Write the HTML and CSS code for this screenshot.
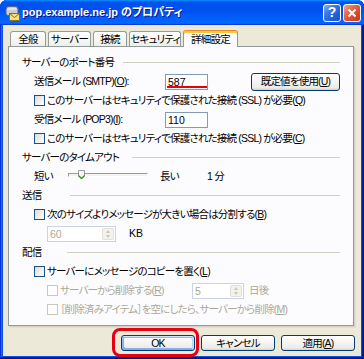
FILE: index.html
```html
<!DOCTYPE html>
<html lang="ja">
<head>
  <meta charset="UTF-8" />
  <title>pop.example.ne.jp のプロパティ</title>
  <link rel="stylesheet" href="styles.css">
</head>
<body>

<div class="window">
  <div class="titlebar">
    <svg class="app-icon" width="16" height="16" viewBox="0 0 16 16">
      <path d="M2 4.5 Q2 1.5 5 1.5 L11 1.5 Q14 1.5 14 4.5 L14 8.5 Q14 10.5 12 10.5 L4 10.5 Q2 10.5 2 8.5 Z" fill="#c9ccd3" stroke="#5d6677"/>
      <path d="M3.5 4 L12.5 4" stroke="#ffffff" stroke-width="1"/>
      <rect x="5.5" y="8.5" width="10" height="7" fill="#f5e27a" stroke="#8c6d12"/>
      <path d="M5.5 8.5 L10.5 12.5 L15.5 8.5" fill="none" stroke="#8c6d12"/>
    </svg>
    <span class="title">pop.example.ne.jp のプロパティ</span>
    <div class="title-buttons">
      <span class="tb-btn tb-help">?</span>
      <span class="tb-btn tb-close">
        <svg width="10" height="10" viewBox="0 0 10 10"><path d="M1.5 1.5 L8.5 8.5 M8.5 1.5 L1.5 8.5" stroke="#fff" stroke-width="2"/></svg>
      </span>
    </div>
  </div>

  <div class="client">
    <ul class="tabs">
      <li class="tab tab-general">全般</li>
      <li class="tab tab-server">サーバー</li>
      <li class="tab tab-conn">接続</li>
      <li class="tab tab-security">セキュリティ</li>
      <li class="tab tab-advanced active">詳細設定</li>
    </ul>

    <div class="panel">
      <div class="sec-head">
        <span class="sec-title w-port">サーバーのポート番号</span>
        <i class="rule"></i>
      </div>
      <div class="row indent">
        <span class="port-label">送信メール (SMTP)(<u>O</u>):</span>
        <span class="field marked">587</span>
        <button class="btn btn-reset">既定値を使用(<u>U</u>)</button>
      </div>
      <div class="row indent">
        <span class="cb"></span>このサーバーはセキュリティで保護された接続 (SSL) が必要(<u>Q</u>)
      </div>
      <div class="row indent">
        <span class="port-label">受信メール (POP3)(<u>I</u>):</span>
        <span class="field">110</span>
      </div>
      <div class="row indent">
        <span class="cb"></span>このサーバーはセキュリティで保護された接続 (SSL) が必要(<u>C</u>)
      </div>

      <div class="sec-head">
        <span class="sec-title w-timeout">サーバーのタイムアウト</span>
        <i class="rule"></i>
      </div>
      <div class="row indent timeout-row">
        <span>短い</span>
        <span class="trackbar">
          <span class="channel"></span>
          <svg class="thumb" width="7" height="10" viewBox="0 0 7 10">
            <path d="M0.5 0.5 L6.5 0.5 L6.5 6 L3.5 9 L0.5 6 Z" fill="#f7f7f4" stroke="#9a9a94"/>
            <path d="M0.5 5.5 L3.5 8.5 L6.5 5.5" fill="none" stroke="#21a121" stroke-width="1.2"/>
          </svg>
        </span>
        <span class="long-label">長い</span>
        <span>1 分</span>
      </div>

      <div class="sec-head">
        <span class="sec-title w-send">送信</span>
        <i class="rule"></i>
      </div>
      <div class="row indent">
        <span class="cb"></span>次のサイズよりメッセージが大きい場合は分割する(<u>B</u>)
      </div>
      <div class="row indent2">
        <span class="spin spin-size">
          <span class="spin-value">60</span>
          <span class="spin-btns"><span class="up"></span><span class="down"></span></span>
        </span>
        <span class="unit-kb">KB</span>
      </div>

      <div class="sec-head">
        <span class="sec-title w-deliver">配信</span>
        <i class="rule"></i>
      </div>
      <div class="row indent">
        <span class="cb"></span>サーバーにメッセージのコピーを置く(<u>L</u>)
      </div>
      <div class="row indent2 disabled">
        <span class="delete-label"><span class="cb cb-off"></span>サーバーから削除する(<u>R</u>)</span>
        <span class="spin spin-days">
          <span class="spin-value">5</span>
          <span class="spin-btns"><span class="up"></span><span class="down"></span></span>
        </span>
        <span class="unit-days">日後</span>
      </div>
      <div class="row indent2 disabled">
        <span class="cb cb-off"></span>［削除済みアイテム］を空にしたら、サーバーから削除(<u>M</u>)
      </div>
    </div>

    <div class="actions">
      <span class="ok-wrap"><button class="btn btn-action btn-default">OK</button></span>
      <button class="btn btn-action">キャンセル</button>
      <button class="btn btn-action">適用(<u>A</u>)</button>
    </div>
  </div>
</div>

</body>
</html>
```

FILE: styles.css
```css
* {
  box-sizing: border-box;
}

body {
  margin: 0;
  background: #ffffff;
  font-family: "Liberation Sans", "Noto Sans CJK JP", sans-serif;
  font-size: 11px;
  line-height: 13px;
  color: #000;
  font-feature-settings: "palt";
}

u {
  text-decoration: underline;
  text-underline-offset: 1px;
}

/* window frame */
.window {
  width: 364px;
  height: 359px;
  display: flex;
  flex-direction: column;
  background: #0a52e0;
  border-radius: 7px 7px 0 0;
  box-shadow: inset -1px -1px #00138c, inset 1px 1px #0831d9, inset -2px -2px #001ea0, inset 2px 2px #166aee;
}

.titlebar {
  height: 25px;
  display: flex;
  align-items: center;
  padding: 0 3px 0 4px;
  border-radius: 7px 7px 0 0;
  background: linear-gradient(180deg, #0997ff, #0053ee 8%, #0050ee 40%, #0066ff 88%, #0066ff 93%, #005bff 95%, #003dd7 96%, #003dd7);
}

.app-icon {
  flex: none;
  margin-top: 1px;
}

.title {
  margin-left: 2px;
  color: #fff;
  font-weight: bold;
  font-size: 11px;
  text-shadow: 1px 1px #0f1089;
  white-space: nowrap;
}

.title-buttons {
  margin-left: auto;
  display: flex;
  gap: 2px;
}

.tb-btn {
  width: 18px;
  height: 18px;
  border: 1px solid #fff;
  border-radius: 3px;
  display: flex;
  align-items: center;
  justify-content: center;
  color: #fff;
  font-weight: bold;
  font-size: 14px;
}

.tb-help {
  background: linear-gradient(135deg, #8fb0f2 0%, #3c78e8 35%, #1f5fdc 70%, #1a50c8 100%);
}

.tb-close {
  background: linear-gradient(135deg, #f5a98f 0%, #e66a48 35%, #d9482a 70%, #c23a1c 100%);
}

/* client area */
.client {
  flex: 1;
  margin: 0 3px 3px;
  background: #ece9d8;
  font-size: 10.5px;
  letter-spacing: -0.8px;
}

.tabs {
  display: flex;
  align-items: flex-end;
  gap: 2px;
  height: 21px;
  margin: 0 0 0 7px;
  padding: 0;
  list-style: none;
  position: relative;
  z-index: 1;
}

.tab {
  height: 15px;
  border: 1px solid #919b9c;
  border-bottom: none;
  border-radius: 3px 3px 0 0;
  background: linear-gradient(180deg, #fff, #fafaf9 26%, #f0f0ea 95%, #ecebe5);
  line-height: 14px;
  text-align: center;
  white-space: nowrap;
}

.tab-general { width: 36px; }
.tab-server { width: 43px; }
.tab-conn { width: 34px; }
.tab-security { width: 52px; }
.tab-advanced { width: 55px; }

.tab.active {
  height: 17px;
  margin-bottom: -1px;
  padding-top: 1px;
  background: #fcfcfe;
  border-top-color: #e68b2c;
  box-shadow: inset 0 2px #ffc73c;
}

.panel {
  height: 280px;
  margin: 0 7px 0 5px;
  padding: 6px 13px 0;
  background: #fcfcfe;
  border: 1px solid #919b9c;
  box-shadow: 1px 1px #d6d0c5, 2px 2px #e2ded3;
}

.sec-head,
.row {
  height: 19px;
  display: flex;
  align-items: center;
  white-space: nowrap;
}

.sec-title {
  flex: none;
}

.w-port { width: 101px; }
.w-timeout { width: 110px; }
.w-send { width: 48px; }
.w-deliver { width: 45px; }

.rule {
  flex: 1;
  height: 1px;
  background: #d0d0bf;
}

.indent {
  padding-left: 12px;
}

.indent2 {
  padding-left: 25px;
}

.port-label {
  width: 131px;
  flex: none;
}

.field {
  width: 43px;
  height: 16px;
  flex: none;
  padding-left: 2px;
  border: 1px solid #7f9db9;
  background: #fff;
  line-height: 14px;
  letter-spacing: 0;
  position: relative;
}

.field.marked::after {
  content: "";
  position: absolute;
  left: 1px;
  right: 0;
  bottom: 1px;
  height: 2px;
  background: #e50012;
}

.btn {
  font: inherit;
  letter-spacing: inherit;
  color: #000;
  padding: 0;
  border: 1px solid #003c74;
  border-radius: 3px;
  background: linear-gradient(180deg, #fff, #ecebe6 86%, #d6d0c5);
}

.btn-reset {
  width: 89px;
  height: 18px;
  margin-left: 43px;
}

.cb {
  width: 11px;
  height: 11px;
  flex: none;
  margin-right: 2px;
  border: 1px solid #1c5180;
  background: linear-gradient(135deg, #dcdcd7, #fff);
}

.cb-off {
  border-color: #cac8bb;
  background: #fff;
}

.disabled {
  color: #aca899;
}

/* timeout slider */
.timeout-row {
  display: grid;
  grid-template-columns: 34px 80px 59px auto;
}

.long-label {
  padding-left: 12px;
}

.trackbar {
  height: 12px;
  position: relative;
  display: flex;
  align-items: center;
  margin-top: -4px;
}

.channel {
  width: 100%;
  height: 4px;
  border: 1px solid;
  border-color: #9d9c99 #fff #fff #9d9c99;
  background: #f3f3ef;
}

.thumb {
  position: absolute;
  left: 10px;
  top: 1px;
}

/* spin boxes */
.spin {
  height: 16px;
  display: flex;
  border: 1px solid #c9d5e3;
  background: #fff;
  color: #aca899;
  letter-spacing: 0;
  flex: none;
}

.spin-size { width: 69px; }
.spin-days { width: 52px; }

.spin-value {
  flex: 1;
  padding-left: 2px;
  line-height: 14px;
}

.spin-btns {
  width: 12px;
  margin: 1px;
  display: flex;
  flex-direction: column;
  border: 1px solid #e2e0d6;
  border-radius: 2px;
  background: #f3f2ec;
}

.spin-btns span {
  flex: 1;
  display: flex;
  align-items: center;
  justify-content: center;
}

.spin-btns .up::before {
  content: "";
  border: 2px solid transparent;
  border-bottom: 3px solid #c9c7ba;
  border-top: none;
}

.spin-btns .down::before {
  content: "";
  border: 2px solid transparent;
  border-top: 3px solid #c9c7ba;
  border-bottom: none;
}

.unit-kb {
  margin-left: 13px;
  letter-spacing: 0;
}

.delete-label {
  width: 145px;
  display: flex;
  align-items: center;
}

.unit-days {
  margin-left: 5px;
}

/* dialog buttons */
.actions {
  display: flex;
  justify-content: flex-end;
  gap: 6px;
  margin: 9px 6px 0 0;
}

.btn-action {
  width: 74px;
  height: 16px;
}

.btn-default {
  box-shadow: inset -1px 1px #cee7ff, inset 1px 2px #98b8ea, inset -2px 2px #bcd4f6, inset 1px -1px #89ade4, inset 2px -2px #89ade4;
}

.ok-wrap {
  position: relative;
  display: flex;
}

.ok-wrap::after {
  content: "";
  position: absolute;
  top: -7px;
  left: -9px;
  right: -4px;
  bottom: -6px;
  border: 3px solid #e50012;
  border-radius: 8px;
}
```
